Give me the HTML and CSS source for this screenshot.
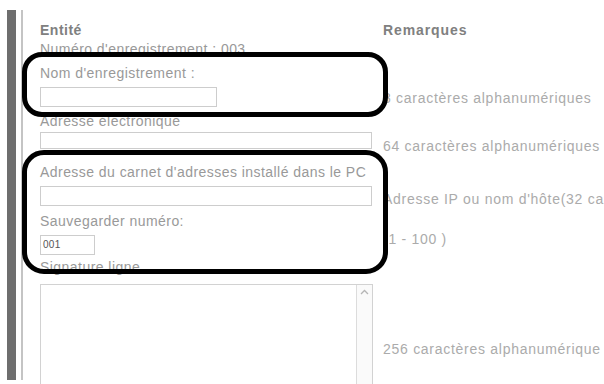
FILE: index.html
```html
<!DOCTYPE html>
<html lang="fr">
<head>
<meta charset="utf-8">
<title>Entité</title>
<link rel="stylesheet" href="styles.css">
</head>
<body>
<div class="page">
  <div class="bar"></div>
  <div class="rail"></div>
  <div class="content">
    <div class="row head">
      <div class="label strong">Entité</div>
      <div class="remark strong">Remarques</div>
    </div>
    <div class="row r-num">
      <div class="label">Numéro d'enregistrement : 003</div>
      <div></div>
    </div>
    <div class="row r-nom">
      <div class="field">
        <div class="label">Nom d'enregistrement :</div>
        <div class="input w-name"></div>
      </div>
      <div class="remark">8 caractères alphanumériques</div>
    </div>
    <div class="row r-mail">
      <div class="field">
        <div class="label">Adresse électronique</div>
        <div class="input w-full short"></div>
      </div>
      <div class="remark">64 caractères alphanumériques</div>
    </div>
    <div class="row r-pc">
      <div class="field">
        <div class="label">Adresse du carnet d'adresses installé dans le PC</div>
        <div class="input w-full"></div>
      </div>
      <div class="remark">Adresse IP ou nom d'hôte(32 caractères)</div>
    </div>
    <div class="row r-save">
      <div class="field">
        <div class="label">Sauvegarder numéro:</div>
        <div class="input w-num"><span class="value">001</span></div>
      </div>
      <div class="remark">(1 - 100 )</div>
    </div>
    <div class="row r-sig">
      <div class="field">
        <div class="label">Signature ligne</div>
        <div class="textarea">
          <div class="scroll">
            <svg class="arrow" width="9" height="6" viewBox="0 0 9 6"><path d="M1 5 L4.5 1.5 L8 5" fill="none" stroke="#b5b5b5" stroke-width="1.3"/></svg>
          </div>
        </div>
      </div>
      <div class="remark">256 caractères alphanumérique</div>
    </div>
  </div>
  <div class="ring ring-1"></div>
  <div class="ring ring-2"></div>
</div>
</body>
</html>
```

FILE: styles.css
```css
html, body {
  margin: 0;
  padding: 0;
  background: #ffffff;
  overflow: hidden;
}

.page {
  position: relative;
  display: flex;
  align-items: flex-start;
  width: 604px;
  height: 384px;
  padding: 10px 0 0 7px;
  box-sizing: border-box;
  overflow: hidden;
  font-family: "Liberation Sans", Arial, sans-serif;
  font-size: 14px;
  line-height: 16px;
  color: #999999;
}

.bar {
  width: 9px;
  height: 370px;
  background: #6e6e6e;
  flex: none;
}

.rail {
  width: 2px;
  height: 370px;
  margin-left: 5px;
  background: #c4c4c4;
  flex: none;
}

.content {
  flex: 1;
  padding: 12px 0 0 17px;
  white-space: nowrap;
}

.row {
  display: grid;
  grid-template-columns: 343px 1fr;
}

.label {
  letter-spacing: 0.45px;
}

.remark {
  color: #ababab;
  letter-spacing: 0.72px;
  overflow: hidden;
}

.strong {
  font-weight: bold;
  color: #808080;
}

.head .label { letter-spacing: 0.5px; }
.head .remark { letter-spacing: 0.9px; }

.input {
  height: 20px;
  margin-top: 6px;
  border: 1px solid #cdcdcd;
  background: #fff;
  box-sizing: border-box;
}

.input.short { height: 17px; margin-top: 3px; }

.w-name { width: 177px; }
.w-full { width: 332px; }
.w-num  { width: 55px; display: flex; align-items: center; }

.value {
  font-size: 10px;
  color: #555;
  letter-spacing: 0.3px;
  padding-left: 2px;
}

.textarea {
  width: 333px;
  height: 130px;
  margin-top: 9px;
  border: 1px solid #d2d2d2;
  box-sizing: border-box;
  display: flex;
  justify-content: flex-end;
}

.scroll {
  width: 15px;
  border-left: 1px solid #dcdcdc;
  background: #fafafa;
  display: flex;
  justify-content: center;
  padding-top: 4px;
}

.arrow { display: block; }

/* row spacing (rows start at label top) */
.r-num  { margin-top: 3px; }
.r-nom  { margin-top: 8px; }
.r-mail { margin-top: 6px; }
.r-pc   { margin-top: 10px; }
.r-save { margin-top: 6px; }
.r-sig  { margin-top: 4px; }

.r-nom .remark  { padding-top: 25px; }
.r-mail .remark { padding-top: 25px; }
.r-pc .remark   { padding-top: 27px; }
.r-save .remark { padding-top: 18px; }
.r-sig .remark  { padding-top: 82px; }

/* hand-drawn highlight rings on top of the form */
.ring {
  position: absolute;
  left: 22px;
  width: 366px;
  border: 5px solid #000;
  border-radius: 20px;
  box-sizing: border-box;
}

.ring-1 { top: 52px; height: 65px; }
.ring-2 { top: 150px; height: 124px; border-radius: 22px; }
```
